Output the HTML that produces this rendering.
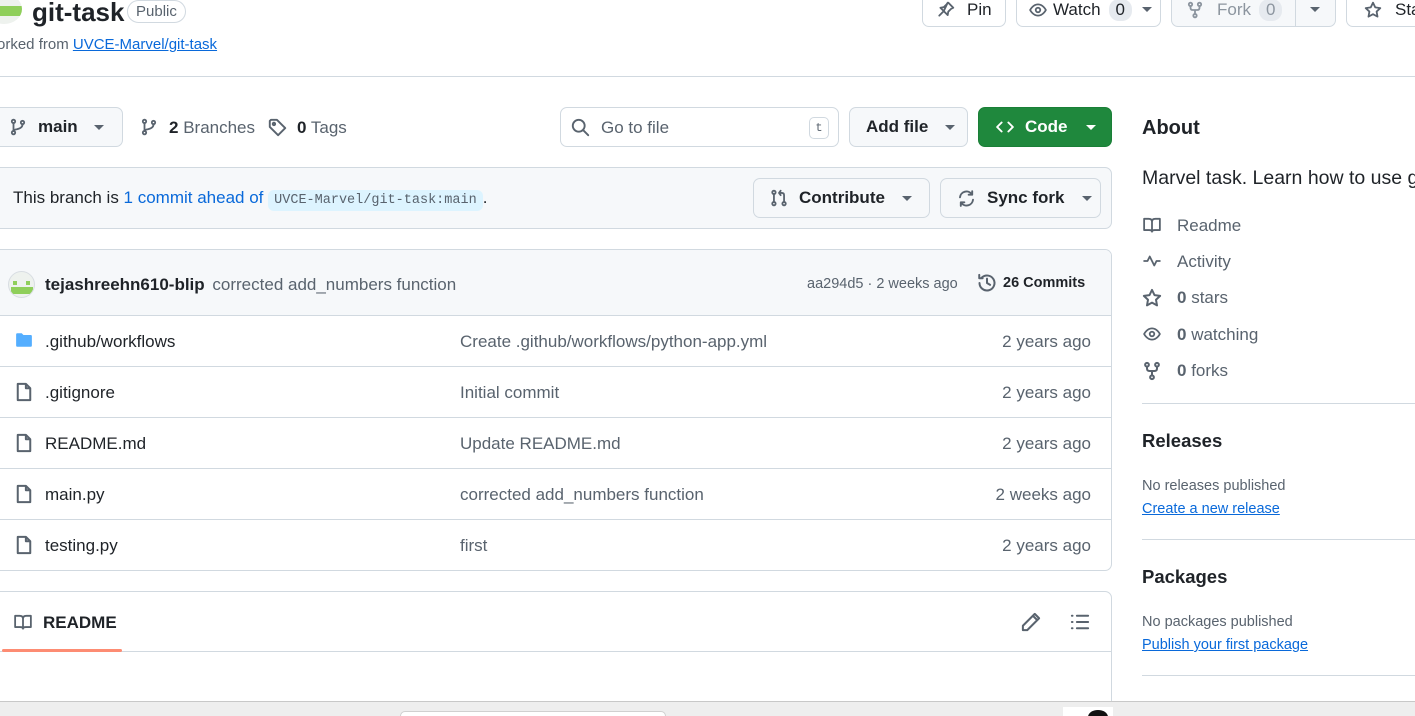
<!DOCTYPE html>
<html style="overflow:hidden;width:1415px;height:716px"><head><meta charset="utf-8"><style>
*{box-sizing:border-box;margin:0;padding:0}
body{width:1415px;height:716px;overflow:hidden;background:#fff;font-family:"Liberation Sans",sans-serif;color:#1f2328;position:relative;font-size:17px}
.a{position:absolute;white-space:nowrap}
.btn{position:absolute;border:1px solid #d1d9e0;border-radius:7px;background:#f6f8fa;display:flex;align-items:center;font-weight:bold;font-size:17px}
.car{display:inline-block;width:0;height:0;border-left:5px solid transparent;border-right:5px solid transparent;border-top:5px solid #59636e}
svg{display:block}
.ic{fill:none;stroke:#59636e;stroke-width:1.6;stroke-linecap:round;stroke-linejoin:round}
.row{position:absolute;left:0;width:1111px;height:51px;border-top:1px solid #d1d9e0}
.row .n{position:absolute;left:45px;top:16px}
.row .m{position:absolute;left:460px;top:16px;color:#59636e}
.row .t{position:absolute;right:20px;top:16px;color:#59636e}
.row svg{position:absolute;left:14px;top:15px}
.blue{color:#0969da}
.side{color:#59636e}
</style></head><body>

<div class="a" style="left:-14px;top:-6px;width:36px;height:30px;border-radius:50%;background:#eef2ee;overflow:hidden"><div style="position:absolute;left:0;top:12px;width:36px;height:10px;background:#8fcf5a"></div></div>
<div class="a" style="left:32px;top:-3px;font-size:26px;font-weight:bold">git-task</div>
<div class="a" style="left:127px;top:0px;border:1px solid #d1d9e0;border-radius:12px;padding:2px 8px;font-size:15px;color:#59636e">Public</div>
<div class="a" style="left:-3px;top:36px;font-size:15px;color:#59636e">orked from <span class="blue" style="text-decoration:underline">UVCE-Marvel/git-task</span></div>

<div class="btn" style="left:922px;top:-8px;width:84px;height:35px;background:#fff;padding-left:14px"><svg width="18" height="18" viewBox="0 0 16 16"><path class="ic" d="M10 1.5l4.5 4.5-2 1-2.5 2.5-.5 3L6 9 2 13M6 9 3 6l3-.5L8.5 3l1-1.5z"/></svg><span style="margin-left:12px;font-weight:normal">Pin</span></div>
<div class="btn" style="left:1016px;top:-8px;width:145px;height:35px;background:#fff;padding-left:11px"><svg width="20" height="18" viewBox="0 0 16 16"><path class="ic" d="M1 8s2.5-5 7-5 7 5 7 5-2.5 5-7 5-7-5-7-5z"/><circle class="ic" cx="8" cy="8" r="2"/></svg><span style="margin-left:5px;font-weight:normal">Watch</span><span style="margin-left:8px;background:#e6eaef;border-radius:10px;padding:1px 7px;font-weight:normal">0</span><span class="car" style="margin-left:10px"></span></div>
<div class="btn" style="left:1171px;top:-8px;width:165px;height:35px;background:#f6f8fa;padding-left:14px;color:#8c959f"><svg width="18" height="18" viewBox="0 0 16 16"><circle class="ic" style="stroke:#8c959f" cx="4" cy="3" r="1.5"/><circle class="ic" style="stroke:#8c959f" cx="12" cy="3" r="1.5"/><circle class="ic" style="stroke:#8c959f" cx="8" cy="13" r="1.5"/><path class="ic" style="stroke:#8c959f" d="M4 4.5v1.5q0 2 2 2h4q2 0 2-2V4.5M8 8v3.5"/></svg><span style="margin-left:13px;font-weight:normal">Fork</span><span style="margin-left:8px;background:#e6eaef;border-radius:10px;padding:1px 7px;font-weight:normal">0</span><span style="position:absolute;left:123px;top:0;height:33px;border-left:1px solid #d1d9e0"></span><span class="car" style="position:absolute;left:138px;top:14px"></span></div>
<div class="btn" style="left:1346px;top:-8px;width:100px;height:35px;background:#fff;padding-left:17px"><svg width="18" height="18" viewBox="0 0 16 16"><path class="ic" d="M8 1.5l2 4.2 4.5.6-3.3 3.1.8 4.5L8 11.7l-4 2.2.8-4.5L1.5 6.3 6 5.7z"/></svg><span style="margin-left:13px;font-weight:normal">Star</span></div>

<div class="a" style="left:0;top:76px;width:1415px;border-top:1px solid #d1d9e0"></div>

<div class="btn" style="left:-10px;top:107px;width:133px;height:40px;padding-left:18px"><svg width="18" height="18" viewBox="0 0 16 16"><circle class="ic" cx="4" cy="3" r="1.5"/><circle class="ic" cx="4" cy="13" r="1.5"/><circle class="ic" cx="12" cy="4" r="1.5"/><path class="ic" d="M4 4.5v7M12 5.5q0 3.5-5 4.5-3 .5-3 1.5"/></svg><span style="margin-left:11px">main</span><span class="car" style="margin-left:16px"></span></div>
<div class="a" style="left:140px;top:118px"><svg width="18" height="18" viewBox="0 0 16 16"><circle class="ic" cx="4" cy="3" r="1.5"/><circle class="ic" cx="4" cy="13" r="1.5"/><circle class="ic" cx="12" cy="4" r="1.5"/><path class="ic" d="M4 4.5v7M12 5.5q0 3.5-5 4.5-3 .5-3 1.5"/></svg></div>
<div class="a" style="left:169px;top:118px;color:#59636e"><b style="color:#1f2328">2</b> Branches</div>
<div class="a" style="left:268px;top:118px"><svg width="19" height="19" viewBox="0 0 16 16"><path class="ic" d="M1.5 2.5v5l7 7 6-6-7-7h-5z"/><circle class="ic" cx="5" cy="5" r="1"/></svg></div>
<div class="a" style="left:297px;top:118px;color:#59636e"><b style="color:#1f2328">0</b> Tags</div>

<div class="a" style="left:560px;top:107px;width:279px;height:40px;border:1px solid #d1d9e0;border-radius:7px"></div>
<div class="a" style="left:571px;top:118px"><svg width="19" height="19" viewBox="0 0 16 16"><circle class="ic" cx="6.5" cy="6.5" r="5"/><path class="ic" d="M10.5 10.5l4 4"/></svg></div>
<div class="a" style="left:601px;top:118px;color:#59636e">Go to file</div>
<div class="a" style="left:809px;top:117px;width:20px;height:22px;border:1px solid #d1d9e0;border-radius:5px;font-family:'Liberation Mono',monospace;font-size:12px;color:#59636e;text-align:center;line-height:20px">t</div>
<div class="btn" style="left:849px;top:107px;width:119px;height:40px;padding-left:16px">Add file<span class="car" style="margin-left:17px"></span></div>
<div class="btn" style="left:978px;top:107px;width:134px;height:40px;padding-left:16px;background:#1f883d;border-color:#1a7f37;color:#fff"><svg width="20" height="18" viewBox="0 0 16 16"><path fill="none" stroke="#fff" stroke-width="1.7" stroke-linecap="round" stroke-linejoin="round" d="M5 4 1 8l4 4M11 4l4 4-4 4"/></svg><span style="margin-left:10px">Code</span><span class="car" style="margin-left:18px;border-top-color:#fff"></span></div>

<div class="a" style="left:-10px;top:167px;width:1122px;height:62px;border:1px solid #d1d9e0;border-radius:7px;background:#f6f8fa"></div>
<div class="a" style="left:13px;top:188px">This branch is <span class="blue">1 commit ahead of</span> <span style="background:#ddf4ff;border-radius:6px;padding:3px 6px;font-family:'Liberation Mono',monospace;font-size:13.5px;color:#59636e">UVCE-Marvel/git-task:main</span>.</div>
<div class="btn" style="left:753px;top:178px;width:177px;height:40px;padding-left:16px"><svg width="18" height="18" viewBox="0 0 16 16"><circle class="ic" cx="3.5" cy="3" r="1.5"/><circle class="ic" cx="3.5" cy="13" r="1.5"/><circle class="ic" cx="12.5" cy="13" r="1.5"/><path class="ic" d="M3.5 4.5v7M12.5 11.5V5.5q0-2-2-2H8m1.5-2L8 3.5l1.5 2"/></svg><span style="margin-left:11px">Contribute</span><span class="car" style="margin-left:17px"></span></div>
<div class="btn" style="left:940px;top:178px;width:161px;height:40px;padding-left:16px"><svg width="19" height="19" viewBox="0 0 16 16"><path class="ic" d="M2.5 7a5.5 5.5 0 0 1 10-2.5M13.5 9a5.5 5.5 0 0 1-10 2.5M12.8 1.8v3h-3M3.2 14.2v-3h3"/></svg><span style="margin-left:11px">Sync fork</span><span class="car" style="margin-left:18px"></span></div>

<div class="a" style="left:-10px;top:249px;width:1122px;height:322px;border:1px solid #d1d9e0;border-radius:7px;overflow:hidden">
  <div style="position:absolute;left:0;top:0;width:1122px;height:66px;background:#f6f8fa"></div>
</div>
<div class="a" style="left:8px;top:271px;width:27px;height:27px;border-radius:50%;background:#eef2ee;border:1px solid #d8dde2;overflow:hidden"><div style="position:absolute;left:4px;top:9px;width:4px;height:4px;background:#8fcf5a"></div><div style="position:absolute;left:17px;top:9px;width:4px;height:4px;background:#8fcf5a"></div><div style="position:absolute;left:2px;top:15px;width:22px;height:7px;background:#8fcf5a"></div></div>
<div class="a" style="left:45px;top:275px"><b>tejashreehn610-blip</b> <span style="color:#59636e;margin-left:3px">corrected add_numbers function</span></div>
<div class="a" style="left:807px;top:276px;font-size:14.5px;color:#59636e">aa294d5 · 2 weeks ago</div>
<div class="a" style="left:977px;top:273px"><svg width="20" height="20" viewBox="0 0 16 16"><path class="ic" d="M2 8a6 6 0 1 0 1.8-4.3M1.8 1.5v2.7h2.7M8 4.5V8l2.5 1.5"/></svg></div>
<div class="a" style="left:1003px;top:275px;font-size:14.5px;font-weight:bold">26 Commits</div>

<div class="a" style="left:0;top:315px">
<div class="row" style="top:0"><svg width="20" height="18" viewBox="0 0 16 16"><path fill="#54aeff" d="M1 3q0-1 1-1h4l1.5 1.5H14q1 0 1 1V13q0 1-1 1H2q-1 0-1-1z"/></svg><span class="n">.github/workflows</span><span class="m">Create .github/workflows/python-app.yml</span><span class="t">2 years ago</span></div>
<div class="row" style="top:51px"><svg width="20" height="20" viewBox="0 0 16 16"><path class="ic" d="M3 1.5h6.5L13 5v9.5H3zM9.5 1.5V5H13"/></svg><span class="n">.gitignore</span><span class="m">Initial commit</span><span class="t">2 years ago</span></div>
<div class="row" style="top:102px"><svg width="20" height="20" viewBox="0 0 16 16"><path class="ic" d="M3 1.5h6.5L13 5v9.5H3zM9.5 1.5V5H13"/></svg><span class="n">README.md</span><span class="m">Update README.md</span><span class="t">2 years ago</span></div>
<div class="row" style="top:153px"><svg width="20" height="20" viewBox="0 0 16 16"><path class="ic" d="M3 1.5h6.5L13 5v9.5H3zM9.5 1.5V5H13"/></svg><span class="n">main.py</span><span class="m">corrected add_numbers function</span><span class="t">2 weeks ago</span></div>
<div class="row" style="top:204px"><svg width="20" height="20" viewBox="0 0 16 16"><path class="ic" d="M3 1.5h6.5L13 5v9.5H3zM9.5 1.5V5H13"/></svg><span class="n">testing.py</span><span class="m">first</span><span class="t">2 years ago</span></div>
</div>

<div class="a" style="left:-10px;top:591px;width:1122px;height:120px;border:1px solid #d1d9e0;border-radius:7px"></div>
<div class="a" style="left:0;top:651px;width:1111px;border-top:1px solid #d1d9e0"></div>
<div class="a" style="left:2px;top:649px;width:120px;height:3px;background:#fd8c73;border-radius:2px"></div>
<div class="a" style="left:13px;top:613px"><svg width="20" height="18" viewBox="0 0 16 16"><path class="ic" d="M1 2.5h4q3 0 3 2.5 0-2.5 3-2.5h4v10h-4.5Q8 12.5 8 14q0-1.5-2.5-1.5H1zM8 5v9"/></svg></div>
<div class="a" style="left:43px;top:613px;font-weight:bold">README</div>
<div class="a" style="left:1021px;top:612px"><svg width="20" height="20" viewBox="0 0 16 16"><path class="ic" d="M11 1.5l3.5 3.5L5 14.5H1.5V11zM9.5 3l3.5 3.5"/></svg></div>
<div class="a" style="left:1070px;top:612px"><svg width="20" height="20" viewBox="0 0 16 16"><path class="ic" d="M5.5 3h9M5.5 8h9M5.5 13h9M1.5 3h.5M1.5 8h.5M1.5 13h.5"/></svg></div>

<div class="a" style="left:1142px;top:117px;font-size:20px;font-weight:bold">About</div>
<div class="a" style="left:1142px;top:167px;font-size:19.5px">Marvel task. Learn how to use git</div>
<div class="a" style="left:1142px;top:216px"><svg width="20" height="18" viewBox="0 0 16 16"><path class="ic" d="M1 2.5h4q3 0 3 2.5 0-2.5 3-2.5h4v10h-4.5Q8 12.5 8 14q0-1.5-2.5-1.5H1zM8 5v9"/></svg></div>
<div class="a side" style="left:1177px;top:216px">Readme</div>
<div class="a" style="left:1142px;top:252px"><svg width="20" height="18" viewBox="0 0 16 16"><path class="ic" d="M1 8h3l2-4 4 8 2-4h3"/></svg></div>
<div class="a side" style="left:1177px;top:252px">Activity</div>
<div class="a" style="left:1142px;top:288px"><svg width="20" height="20" viewBox="0 0 16 16"><path class="ic" d="M8 1.5l2 4.2 4.5.6-3.3 3.1.8 4.5L8 11.7l-4 2.2.8-4.5L1.5 6.3 6 5.7z"/></svg></div>
<div class="a side" style="left:1177px;top:288px"><b>0</b> stars</div>
<div class="a" style="left:1142px;top:325px"><svg width="20" height="18" viewBox="0 0 16 16"><path class="ic" d="M1 8s2.5-5 7-5 7 5 7 5-2.5 5-7 5-7-5-7-5z"/><circle class="ic" cx="8" cy="8" r="2"/></svg></div>
<div class="a side" style="left:1177px;top:325px"><b>0</b> watching</div>
<div class="a" style="left:1142px;top:361px"><svg width="20" height="20" viewBox="0 0 16 16"><circle class="ic" cx="4" cy="3" r="1.5"/><circle class="ic" cx="12" cy="3" r="1.5"/><circle class="ic" cx="8" cy="13" r="1.5"/><path class="ic" d="M4 4.5v1.5q0 2 2 2h4q2 0 2-2V4.5M8 8v3.5"/></svg></div>
<div class="a side" style="left:1177px;top:361px"><b>0</b> forks</div>
<div class="a" style="left:1142px;top:403px;width:280px;border-top:1px solid #d1d9e0"></div>
<div class="a" style="left:1142px;top:430px;font-size:18.5px;font-weight:bold">Releases</div>
<div class="a side" style="left:1142px;top:478px;font-size:14.5px">No releases published</div>
<div class="a blue" style="left:1142px;top:501px;font-size:14.5px;text-decoration:underline">Create a new release</div>
<div class="a" style="left:1142px;top:539px;width:280px;border-top:1px solid #d1d9e0"></div>
<div class="a" style="left:1142px;top:566px;font-size:18.5px;font-weight:bold">Packages</div>
<div class="a side" style="left:1142px;top:614px;font-size:14.5px">No packages published</div>
<div class="a blue" style="left:1142px;top:637px;font-size:14.5px;text-decoration:underline">Publish your first package</div>
<div class="a" style="left:1142px;top:675px;width:280px;border-top:1px solid #d1d9e0"></div>

<div class="a" style="left:0;top:701px;width:1415px;height:15px;background:#eeeeee;border-top:1px solid #c8c8c8;overflow:hidden">
<div style="position:absolute;left:400px;top:9px;width:266px;height:10px;background:#fff;border:1px solid #d0d0d0;border-radius:8px"></div>
<div style="position:absolute;left:1063px;top:5px;width:50px;height:10px;background:#fff"></div>
<div style="position:absolute;left:1088px;top:8px;width:20px;height:14px;border-radius:50%;background:#111"></div>
</div>
</body></html>
